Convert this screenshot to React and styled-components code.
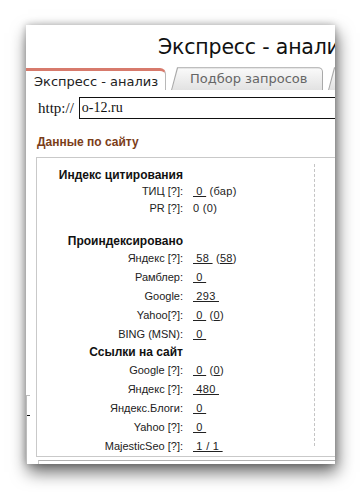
import React from 'react';
import styled, { createGlobalStyle } from 'styled-components';

const GlobalStyle = createGlobalStyle`
  html, body {
    margin: 0;
    background: #fff;
  }
`;

const Stage = styled.div`
  width: 360px;
  height: 492px;
  box-sizing: border-box;
  padding: 25px 25px 0 26px;
  overflow: hidden;
`;

const Window = styled.div`
  width: 309px;
  height: 439px;
  background: #fff;
  overflow: hidden;
  display: flex;
  flex-direction: column;
  box-shadow: 2px 8px 16px rgba(0, 0, 0, 0.6), 0 0 7px rgba(0, 0, 0, 0.25);
`;

const PageTitle = styled.div`
  height: 44px;
  box-sizing: border-box;
  padding: 10px 0 0 132px;
  font-family: "DejaVu Sans", sans-serif;
  font-size: 20.5px;
  letter-spacing: -0.2px;
  color: #111;
  white-space: nowrap;
`;

const TabStrip = styled.div`
  height: 25px;
  display: flex;
  align-items: flex-end;
  gap: 5px;
  white-space: nowrap;
`;

const ActiveTab = styled.div`
  width: 140px;
  height: 22px;
  box-sizing: border-box;
  border-top: 3px solid #d77a6c;
  border-right: 1px solid #b8b8b8;
  border-top-right-radius: 6px;
  padding: 3px 0 0 8px;
  font-family: "DejaVu Sans", sans-serif;
  font-size: 13px;
  color: #222;
  flex-shrink: 0;
`;

const TabFrame = styled.div`
  flex-shrink: 0;
  width: ${p => p.$width}px;
  height: 23px;
  box-sizing: border-box;
  padding: 1px 1px 0 1px;
  background: #a9a9a9;
  border-top-right-radius: 5px;
  clip-path: polygon(6px 0, 100% 0, 100% 100%, 0 100%);
`;

const TabFace = styled.div`
  height: 100%;
  border-top-right-radius: 4px;
  background: linear-gradient(#fafafa, #e2e2e2);
  clip-path: polygon(6px 0, 100% 0, 100% 100%, 0 100%);
  font-family: "DejaVu Sans", sans-serif;
  font-size: 13px;
  color: #666;
  padding: 3px 0 0 18px;
  box-sizing: border-box;
`;

const UrlRow = styled.div`
  display: flex;
  align-items: center;
  gap: 5px;
  padding: 7px 0 0 12px;
  white-space: nowrap;
`;

const UrlLabel = styled.span`
  font-family: "Liberation Serif", serif;
  font-size: 15px;
  color: #111;
`;

const UrlInput = styled.div`
  flex-shrink: 0;
  width: 260px;
  height: 22px;
  box-sizing: border-box;
  border: 1px solid #111;
  padding: 2px 0 0 2px;
  font-family: "Liberation Serif", serif;
  font-size: 14px;
  color: #111;
`;

const SectionTitle = styled.div`
  padding: 16px 0 0 11px;
  height: 19px;
  font-family: "Liberation Sans", sans-serif;
  font-weight: bold;
  font-size: 12px;
  color: #7b3d18;
`;

const Body = styled.div`
  display: flex;
  margin-top: 4px;
`;

const Rail = styled.div`
  width: 10px;
  flex-shrink: 0;
  padding-top: 238px;
`;

const RailPiece = styled.div`
  width: 3px;
  height: 68px;
  border: 1px solid #bcbcbc;
  border-right: none;
  border-bottom: none;
  position: relative;

  &::after {
    content: "";
    position: absolute;
    left: 0;
    top: 19px;
    width: 3px;
    height: 1px;
    background: #111;
  }
`;

const Column = styled.div`
  flex-shrink: 0;
`;

const DataBox = styled.div`
  width: 300px;
  height: 300px;
  box-sizing: border-box;
  border: 1px solid #c9c9c9;
  padding: 6px 0 0 0;
`;

const DataGrid = styled.div`
  width: 278px;
  height: 282px;
  box-sizing: border-box;
  border-right: 1px dashed #c4c4c4;
  padding-top: 3px;
  display: grid;
  grid-template-columns: 146px 1fr;
  column-gap: 10px;
  align-content: start;
  font-family: "Liberation Sans", sans-serif;
  font-size: 11px;
  color: #222;
`;

const Heading = styled.div`
  grid-column: 1 / span 2;
  width: 146px;
  height: ${p => p.$h}px;
  line-height: ${p => p.$h}px;
  text-align: right;
  font-size: 12px;
  font-weight: bold;
  color: #111;
  white-space: nowrap;
`;

const Label = styled.div`
  height: ${p => p.$h}px;
  line-height: ${p => p.$h}px;
  text-align: right;
  white-space: nowrap;
`;

const Value = styled.div`
  height: ${p => p.$h}px;
  line-height: ${p => p.$h}px;
  white-space: pre;
  letter-spacing: 0.3px;
`;

const Link = styled.span`
  text-decoration: underline;
`;

const Spacer = styled.div`
  grid-column: 1 / span 2;
  height: ${p => p.$h}px;
`;

const BottomLine = styled.div`
  width: 300px;
  height: 3px;
  margin: 3px 0 0 2px;
  border-top: 1px solid #b0b0b0;
  border-left: 1px solid #c9c9c9;
`;

const rows = [
  { type: 'head', text: 'Индекс цитирования', h: 16 },
  { label: 'ТИЦ [?]:', value: [['l', '\u00a00\u00a0'], ['t', ' (бар)']], h: 17 },
  { label: 'PR [?]:', value: [['t', '0 (0)']], h: 17 },
  { type: 'space', h: 17 },
  { type: 'head', text: 'Проиндексировано', h: 15 },
  { label: 'Яндекс [?]:', value: [['l', '\u00a058\u00a0'], ['t', ' ('], ['l', '58'], ['t', ')']], h: 19 },
  { label: 'Рамблер:', value: [['l', '\u00a00\u00a0']], h: 19 },
  { label: 'Google:', value: [['l', '\u00a0293\u00a0']], h: 19 },
  { label: 'Yahoo[?]:', value: [['l', '\u00a00\u00a0'], ['t', ' ('], ['l', '0'], ['t', ')']], h: 19 },
  { label: 'BING (MSN):', value: [['l', '\u00a00\u00a0']], h: 19 },
  { type: 'head', text: 'Ссылки на сайт', h: 17 },
  { label: 'Google [?]:', value: [['l', '\u00a00\u00a0'], ['t', ' ('], ['l', '0'], ['t', ')']], h: 19 },
  { label: 'Яндекс [?]:', value: [['l', '\u00a0480\u00a0']], h: 19 },
  { label: 'Яндекс.Блоги:', value: [['l', '\u00a00\u00a0']], h: 19 },
  { label: 'Yahoo [?]:', value: [['l', '\u00a00\u00a0']], h: 19 },
  { label: 'MajesticSeo [?]:', value: [['l', '\u00a01\u00a0/\u00a01\u00a0']], h: 19 },
];

const App = () => (
  <>
    <GlobalStyle />
    <Stage>
      <Window>
        <PageTitle>Экспресс - анализ</PageTitle>
        <TabStrip>
          <ActiveTab>Экспресс - анализ</ActiveTab>
          <TabFrame $width={152}>
            <TabFace>Подбор запросов</TabFace>
          </TabFrame>
          <TabFrame $width={60}>
            <TabFace />
          </TabFrame>
        </TabStrip>
        <UrlRow>
          <UrlLabel>http://</UrlLabel>
          <UrlInput>o-12.ru</UrlInput>
        </UrlRow>
        <SectionTitle>Данные по сайту</SectionTitle>
        <Body>
          <Rail>
            <RailPiece />
          </Rail>
          <Column>
            <DataBox>
              <DataGrid>
                {rows.map((r, i) => {
                  if (r.type === 'head') return <Heading key={i} $h={r.h}>{r.text}</Heading>;
                  if (r.type === 'space') return <Spacer key={i} $h={r.h} />;
                  return (
                    <React.Fragment key={i}>
                      <Label $h={r.h}>{r.label}</Label>
                      <Value $h={r.h}>
                        {r.value.map(([kind, txt], j) =>
                          kind === 'l' ? <Link key={j}>{txt}</Link> : <span key={j}>{txt}</span>
                        )}
                      </Value>
                    </React.Fragment>
                  );
                })}
              </DataGrid>
            </DataBox>
            <BottomLine />
          </Column>
        </Body>
      </Window>
    </Stage>
  </>
);

export default App;
